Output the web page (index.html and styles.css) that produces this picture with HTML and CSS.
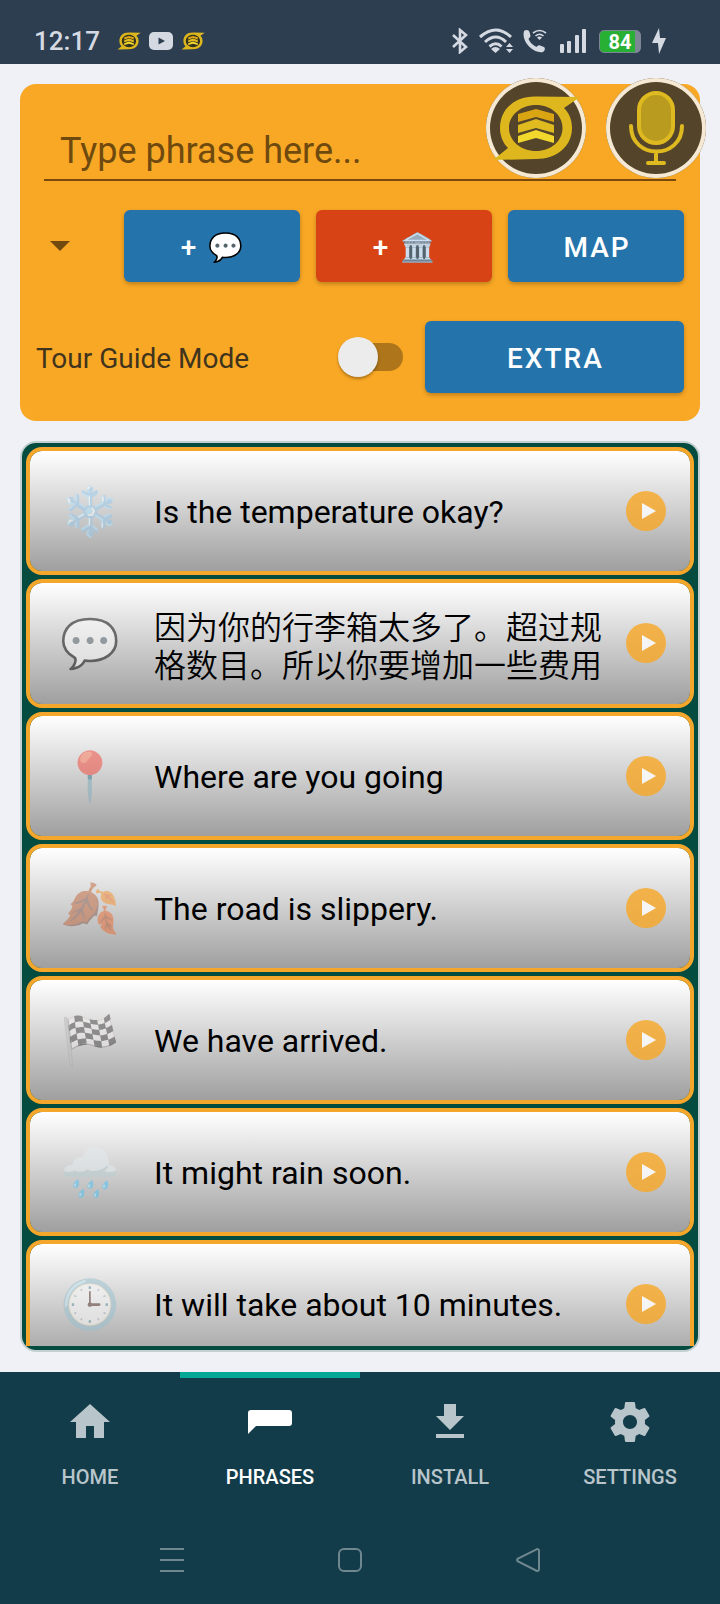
FILE: index.html
```html
<!DOCTYPE html>
<html lang="en">
<head>
    <meta charset="UTF-8">
    <meta name="viewport" content="width=device-width, initial-scale=1.0">
    <title>Phrases</title>
    <link rel="stylesheet" href="styles.css">
</head>
<body>
    <!-- Shared symbols -->
    <svg class="defs" aria-hidden="true">
        <symbol id="logo" viewBox="0 0 100 100">
            <path fill="#ddb71d" fill-rule="evenodd" d="M94 19L78 30C84 36 86 43 86 50C86 68 71 81 50 81L7 82L22 70C17 65 14 58 14 50C14 31 29 18 50 18.500ZM50 27C35 27 23 37 23 50S35 73 50 73S76.500 63 76.500 50S65 27 50 27Z"/>
            <path fill="#d9a513" d="M32 36L50 31L68 36V44L50 39L32 44Z"/>
            <path fill="#e0bb20" d="M32 47L50 41L68 47V55L50 50L32 55Z"/>
            <path fill="#f2d82c" d="M32 58L50 52L68 58V65L50 60L32 65Z"/>
        </symbol>
        <symbol id="play" viewBox="0 0 40 40">
            <circle cx="20" cy="20" r="20" fill="#f9a825"/>
            <path fill="#fff" d="M16 12L30 20L16 28Z"/>
        </symbol>
    </svg>

    <header class="status-bar">
        <span class="clock">12:17</span>
        <div class="notifications">
            <svg width="24" height="24" viewBox="5 5 90 90"><circle cx="50" cy="50" r="32" fill="#33331f"/><use href="#logo" width="100" height="100"/></svg>
            <svg width="24" height="18" viewBox="0 0 24 18"><rect width="24" height="18" rx="5" fill="#d5dae2"/><path fill="#2d3e50" d="M9.500 5.500L16 9L9.500 12.500Z"/></svg>
            <svg width="24" height="24" viewBox="5 5 90 90"><circle cx="50" cy="50" r="32" fill="#33331f"/><use href="#logo" width="100" height="100"/></svg>
        </div>
        <div class="indicators">
            <svg width="16" height="26" viewBox="0 0 16 26" fill="none" stroke="#d5dae2" stroke-width="2.600"><path d="M1 7L14 19L8 24V2L14 7L1 19"/></svg>
            <svg class="wifi" width="34" height="26" viewBox="0 0 34 26" fill="none" stroke="#d5dae2" stroke-width="3">
                <path d="M1 9Q17-5 32 9M6 14Q17 4 27 14M10.500 18.500Q17 13 22.500 18.500"/>
                <path fill="#d5dae2" stroke="none" d="M12 21Q16.500 17 21 21L16.500 25ZM27 19L30.500 15L34 19ZM27 21H34L30.500 25Z"/>
            </svg>
            <svg width="24" height="24" viewBox="0 0 24 24" fill="none" stroke="#d5dae2">
                <path fill="#d5dae2" stroke="none" d="M1 2C3 0 6 1 6.500 3L7.500 7C7.500 8 6 9 5.500 10C7 13.500 10 16.500 13.500 18C14.500 17 15.500 16 17 16.500L21 18C22.500 19 22 22 20 23C11 25-2 13 1 2Z"/>
                <path stroke-width="1.600" d="M10 4Q16.500-1 23 4M12.500 7Q16.500 3.500 20.500 7"/>
                <path fill="#d5dae2" stroke="none" d="M14 8.500Q16.500 6.500 19 8.500L16.500 11Z"/>
            </svg>
            <svg width="26" height="24" viewBox="0 0 26 24" fill="#d5dae2"><rect y="15" width="4" height="9" rx="1"/><rect x="7" y="12" width="4" height="12" rx="1"/><rect x="15" y="6" width="4" height="18" rx="1"/><rect x="22" width="4" height="24" rx="1"/></svg>
            <span class="battery">84</span>
            <svg class="bolt" width="14" height="26" viewBox="0 0 14 26" fill="#d5dae2"><path d="M7 0L0 15H6L7 26L14 10H8Z"/></svg>
        </div>
    </header>

    <main>
        <section class="composer">
            <input class="phrase-input" type="text" placeholder="Type phrase here..." aria-label="Phrase">
            <div class="button-row">
                <div class="spinner">
                    <select aria-label="Category"><option></option></select>
                </div>
                <button class="btn">+ <span class="emoji">💬</span></button>
                <button class="btn btn-red">+ <span class="emoji">🏛️</span></button>
                <button class="btn">MAP</button>
            </div>
            <div class="mode-row">
                <label for="tour-mode">Tour Guide Mode</label>
                <input class="switch" type="checkbox" id="tour-mode">
                <button class="btn btn-extra">EXTRA</button>
            </div>
            <div class="fabs">
                <button class="fab" aria-label="Speak phrase">
                    <svg width="100" height="100"><use href="#logo"/></svg>
                </button>
                <button class="fab" aria-label="Record">
                    <svg width="100" height="100" viewBox="0 0 100 100" fill="none" stroke="#dfb920" stroke-width="4" stroke-linecap="round">
                        <rect x="33" y="15" width="34" height="50" rx="17" fill="#b99b20"/>
                        <path d="M25 48C25 82 76 82 76 48M50 74V85M42 85H58"/>
                    </svg>
                </button>
            </div>
        </section>

        <section class="phrase-panel">
            <ul class="phrases">
                <li class="phrase">
                    <span class="phrase-icon">❄️</span>
                    <span class="phrase-text">Is the temperature okay?</span>
                    <button class="play" aria-label="Play"><svg width="40" height="40"><use href="#play"/></svg></button>
                </li>
                <li class="phrase">
                    <span class="phrase-icon">💬</span>
                    <span class="phrase-text" lang="zh-CN">因为你的行李箱太多了。超过规格数目。所以你要增加一些费用</span>
                    <button class="play" aria-label="Play"><svg width="40" height="40"><use href="#play"/></svg></button>
                </li>
                <li class="phrase">
                    <span class="phrase-icon">📍</span>
                    <span class="phrase-text">Where are you going</span>
                    <button class="play" aria-label="Play"><svg width="40" height="40"><use href="#play"/></svg></button>
                </li>
                <li class="phrase">
                    <span class="phrase-icon">🍂</span>
                    <span class="phrase-text">The road is slippery.</span>
                    <button class="play" aria-label="Play"><svg width="40" height="40"><use href="#play"/></svg></button>
                </li>
                <li class="phrase">
                    <span class="phrase-icon">🏁</span>
                    <span class="phrase-text">We have arrived.</span>
                    <button class="play" aria-label="Play"><svg width="40" height="40"><use href="#play"/></svg></button>
                </li>
                <li class="phrase">
                    <span class="phrase-icon">🌧️</span>
                    <span class="phrase-text">It might rain soon.</span>
                    <button class="play" aria-label="Play"><svg width="40" height="40"><use href="#play"/></svg></button>
                </li>
                <li class="phrase">
                    <span class="phrase-icon">🕒</span>
                    <span class="phrase-text">It will take about 10 minutes.</span>
                    <button class="play" aria-label="Play"><svg width="40" height="40"><use href="#play"/></svg></button>
                </li>
            </ul>
        </section>
    </main>

    <footer>
        <nav class="tabs">
            <a class="tab" href="#home">
                <svg width="48" height="48" viewBox="0 0 24 24"><path d="M10 20v-6h4v6h5v-8h3L12 3 2 12h3v8z"/></svg>
                HOME
            </a>
            <a class="tab active" href="#phrases">
                <svg width="48" height="48" viewBox="0 0 48 48"><path d="M5 12H43Q46 12 46 15V25Q46 28 43 28H10L2 36V15Q2 12 5 12Z"/></svg>
                PHRASES
            </a>
            <a class="tab" href="#install">
                <svg width="48" height="48" viewBox="0 0 24 24"><path d="M19 9h-4V3H9v6H5l7 7 7-7zM5 18v2h14v-2H5z"/></svg>
                INSTALL
            </a>
            <a class="tab" href="#settings">
                <svg width="48" height="48" viewBox="0 0 24 24"><path d="M19.430 12.980c.04-.32.07-.64.07-.98s-.03-.66-.07-.98l2.110-1.650c.19-.15.24-.42.12-.64l-2-3.460c-.12-.22-.39-.3-.61-.22l-2.490 1c-.52-.4-1.080-.73-1.690-.98l-.38-2.650C14.460 2.180 14.250 2 14 2h-4c-.25 0-.46.18-.49.42l-.38 2.650c-.61.25-1.170.59-1.690.98l-2.490-1c-.23-.09-.49 0-.61.22l-2 3.460c-.13.22-.07.49.12.64l2.110 1.650c-.04.32-.07.65-.07.98s.03.66.07.98l-2.110 1.650c-.19.15-.24.42-.12.64l2 3.460c.12.22.39.3.61.22l2.490-1c.52.4 1.080.73 1.690.98l.38 2.650c.03.24.24.42.49.42h4c.25 0 .46-.18.49-.42l.38-2.650c.61-.25 1.170-.59 1.690-.98l2.490 1c.23.09.49 0 .61-.22l2-3.460c.12-.22.07-.49-.12-.64l-2.110-1.650zM12 15.500c-1.930 0-3.500-1.570-3.500-3.500s1.570-3.500 3.500-3.500 3.500 1.570 3.500 3.500-1.570 3.500-3.500 3.500z"/></svg>
                SETTINGS
            </a>
        </nav>
        <div class="system-nav">
            <button aria-label="Recents"><svg width="24" height="24" viewBox="0 0 24 24"><path d="M0 1H24M0 12H24M0 23H24"/></svg></button>
            <button aria-label="Home"><svg width="24" height="24" viewBox="0 0 24 24"><rect x="1" y="1" width="22" height="22" rx="5"/></svg></button>
            <button aria-label="Back"><svg width="24" height="24" viewBox="0 0 24 24"><path d="M20.500 1.300L2 10.500Q0 12 2 13.500L20.500 22.700Q23 23.500 23 21V3Q23 .5 20.500 1.300Z"/></svg></button>
        </div>
    </footer>
</body>
</html>
```

FILE: styles.css
```css
:root {
    --page-bg: #f0f1f6;
    --bar-bg: #2d3e50;
    --amber: #f9a825;
    --blue: #2474ab;
    --red: #d84315;
    --green: #044b40;
    --nav-bg: #133c4a;
    --nav-text: #b8c5ca;
    --status-text: #d5dae2;
}

* {
    box-sizing: border-box;
}

body {
    margin: 0;
    height: 100vh;
    display: flex;
    flex-direction: column;
    background: var(--page-bg);
    font-family: Roboto, "Noto Sans CJK SC", sans-serif;
}

button {
    border: none;
    padding: 0;
    background: none;
    font-family: inherit;
    cursor: pointer;
}

svg {
    display: block;
}

.defs {
    position: absolute;
    width: 0;
    height: 0;
}

/* Status bar */
.status-bar {
    flex: none;
    height: 64px;
    padding: 18px 54px 0 34px;
    display: flex;
    align-items: center;
    background: var(--bar-bg);
    color: var(--status-text);
}

.clock {
    font-size: 26px;
    font-weight: 500;
}

.notifications {
    display: flex;
    align-items: center;
    gap: 8px;
    margin-left: 17px;
}

.indicators {
    display: flex;
    align-items: center;
    gap: 13px;
    margin-left: auto;
}

.wifi,
.bolt {
    margin: 0 -3px 0 -2px;
}

.bolt {
    margin-right: 0;
}

.battery {
    width: 42px;
    height: 23px;
    border: 1px solid #7d8694;
    border-radius: 5px;
    background: linear-gradient(90deg, #27b034 88%, #7d8694 88%);
    color: #fff;
    font-size: 20px;
    font-weight: 700;
    line-height: 22px;
    text-align: center;
}

/* Page */
main {
    flex: 1;
    min-height: 0;
    padding: 20px;
    display: flex;
    flex-direction: column;
    gap: 20px;
}

.composer {
    position: relative;
    padding: 38px 16px 28px;
    border-radius: 16px;
    background: var(--amber);
    display: flex;
    flex-direction: column;
}

.phrase-input {
    margin: 0 8px;
    padding: 9px 16px 7px;
    border: none;
    border-bottom: 2px solid #7a4a0c;
    border-radius: 0;
    background: none;
    font-family: inherit;
    font-size: 36px;
    line-height: 41px;
    outline: none;
}

.phrase-input::placeholder {
    color: #6f4a0f;
    opacity: 1;
}

.button-row {
    display: flex;
    gap: 16px;
    margin-top: 29px;
}

.spinner {
    position: relative;
    width: 72px;
}

.spinner select {
    width: 100%;
    height: 100%;
    appearance: none;
    border: none;
    background: none;
}

.spinner::after {
    content: "";
    position: absolute;
    top: 31px;
    left: 14px;
    border: 10px solid transparent;
    border-top-color: #70490f;
    border-bottom: none;
    pointer-events: none;
}

.btn {
    flex: 1;
    height: 72px;
    padding: 2px 0 0 2px;
    border-radius: 6px;
    background: var(--blue);
    box-shadow: 0 2px 4px rgba(0, 0, 0, 0.25);
    color: #fff;
    font-size: 28px;
    font-weight: 500;
    letter-spacing: 2px;
}

.btn-red {
    background: var(--red);
}

.emoji {
    margin-left: 1px;
}

.mode-row {
    display: flex;
    align-items: center;
    margin-top: 39px;
}

.mode-row label {
    flex: 1;
    padding-top: 2px;
    color: #41341d;
    font-size: 28px;
}

.switch {
    appearance: none;
    position: relative;
    width: 65px;
    height: 40px;
    margin: 0 22px 0 0;
}

.switch::before {
    content: "";
    position: absolute;
    inset: 6px 0 6px 8px;
    border-radius: 14px;
    background: #ae751a;
}

.switch::after {
    content: "";
    position: absolute;
    top: 0;
    left: 0;
    width: 40px;
    height: 40px;
    border-radius: 50%;
    background: #ececec;
    box-shadow: 0 2px 3px rgba(0, 0, 0, 0.3);
}

.btn-extra {
    flex: 0 0 40%;
}

.fabs {
    position: absolute;
    top: -6px;
    right: -6px;
    display: flex;
    gap: 20px;
}

.fab {
    width: 100px;
    height: 100px;
    border-radius: 50%;
    background: #54442a;
    box-shadow: inset 0 0 0 4px #f5e9d3;
}

/* Phrase list */
.phrase-panel {
    flex: 1;
    min-height: 0;
    padding: 4px;
    border: 2px solid #c3d0cf;
    border-radius: 16px;
    background: var(--green);
    overflow: hidden;
}

.phrases {
    height: 100%;
    margin: 0;
    padding: 0;
    overflow: hidden;
    list-style: none;
}

.phrase {
    min-height: 128px;
    margin-bottom: 4px;
    padding: 23px 24px 22px 30px;
    display: flex;
    align-items: center;
    border: 4px solid #f5a72c;
    border-radius: 16px;
    background: linear-gradient(#fff, #9f9f9f) padding-box;
}

.phrase-icon {
    width: 60px;
    margin-right: 34px;
    font-size: 48px;
    line-height: 56px;
    text-align: center;
    opacity: 0.5;
}

.phrase-text {
    flex: 1;
    font-size: 32px;
    line-height: 38px;
}

.phrase-text:lang(zh) {
    font-family: "Noto Sans CJK SC", sans-serif;
    font-weight: 350;
}

.play {
    margin: 0 0 2px 23px;
    opacity: 0.8;
}

/* Bottom navigation */
footer {
    flex: none;
    background: var(--nav-bg);
}

.tabs {
    display: flex;
}

.tab {
    flex: 1;
    height: 144px;
    padding-top: 20px;
    border-top: 6px solid transparent;
    display: flex;
    flex-direction: column;
    align-items: center;
    gap: 19px;
    color: var(--nav-text);
    fill: currentColor;
    font-size: 20px;
    font-weight: 500;
    line-height: 24px;
    text-decoration: none;
}

.tab.active {
    border-top-color: #05a896;
    color: #fff;
}

.system-nav {
    height: 88px;
    padding-right: 20px;
    display: flex;
    align-items: center;
    justify-content: center;
    gap: 154px;
}

.system-nav svg {
    fill: none;
    stroke: #6f8890;
    stroke-width: 2;
}
```
